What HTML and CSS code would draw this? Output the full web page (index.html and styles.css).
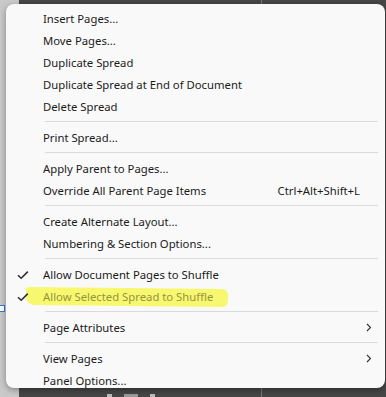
FILE: index.html
```html
<!DOCTYPE html>
<html>
<head>
    <meta charset="utf-8"/>
    <link rel="stylesheet" href="styles.css">
</head>
<body>
<div class="screen">
    <div class="top-strip"><span class="divider"></span></div>
    <span class="handle"></span>
    <div class="menu">
        <div class="item"><span class="label">Insert Pages...</span></div>
        <div class="item"><span class="label">Move Pages...</span></div>
        <div class="item"><span class="label">Duplicate Spread</span></div>
        <div class="item"><span class="label">Duplicate Spread at End of Document</span></div>
        <div class="item"><span class="label">Delete Spread</span></div>
        <div class="sep"></div>
        <div class="item"><span class="label">Print Spread...</span></div>
        <div class="sep"></div>
        <div class="item"><span class="label">Apply Parent to Pages...</span></div>
        <div class="item"><span class="label">Override All Parent Page Items</span><span class="shortcut">Ctrl+Alt+Shift+L</span></div>
        <div class="sep"></div>
        <div class="item"><span class="label">Create Alternate Layout...</span></div>
        <div class="item"><span class="label">Numbering &amp; Section Options...</span></div>
        <div class="sep"></div>
        <div class="item checked">
            <svg class="check" width="12" height="10" viewBox="0 0 12 10"><path d="M1 5.2 L4.2 8.2 L10.8 1.6" fill="none" stroke="#2b2b2b" stroke-width="1.5"/></svg>
            <span class="label">Allow Document Pages to Shuffle</span>
        </div>
        <div class="item checked disabled">
            <span class="marker"></span>
            <svg class="check" width="12" height="10" viewBox="0 0 12 10"><path d="M1 5.2 L4.2 8.2 L10.8 1.6" fill="none" stroke="#2b2b2b" stroke-width="1.5"/></svg>
            <span class="label">Allow Selected Spread to Shuffle</span>
        </div>
        <div class="sep"></div>
        <div class="item"><span class="label">Page Attributes</span>
            <svg class="arrow" width="6" height="9" viewBox="0 0 6 9"><path d="M1 1 L4.5 4.5 L1 8" fill="none" stroke="#333" stroke-width="1.1"/></svg>
        </div>
        <div class="sep"></div>
        <div class="item"><span class="label">View Pages</span>
            <svg class="arrow" width="6" height="9" viewBox="0 0 6 9"><path d="M1 1 L4.5 4.5 L1 8" fill="none" stroke="#333" stroke-width="1.1"/></svg>
        </div>
        <div class="item"><span class="label">Panel Options...</span></div>
    </div>
    <div class="bottom-strip">
        <span class="thumb"></span>
        <span class="thumb light"></span>
        <span class="thumb"></span>
        <span class="divider"></span>
    </div>
</div>
</body>
</html>
```

FILE: styles.css
```css
html, body {
    margin: 0;
    padding: 0;
}

body {
    width: 386px;
    height: 397px;
    overflow: hidden;
    background: linear-gradient(to right, #c9c9c9 19px, #464646 19px);
    font-family: 'Noto Sans', 'Open Sans', sans-serif;
}

.screen {
    position: relative;
    display: flex;
    flex-direction: column;
    height: 397px;
}

.top-strip {
    height: 4px;
    margin-left: 19px;
    position: relative;
}

.top-strip .divider, .bottom-strip .divider {
    position: absolute;
    left: 242px;
    top: 0;
    width: 1px;
    height: 100%;
    background: #7a7a7a;
}

.handle {
    position: absolute;
    left: -1px;
    top: 305px;
    width: 4px;
    height: 5px;
    border: 1px solid #2f7be0;
    background: #fff;
}

.menu {
    margin-left: 6px;
    width: 379px;
    height: 384px;
    box-sizing: border-box;
    padding-top: 3px;
    background: #f9f9f9;
    border-radius: 8px;
    box-shadow: 0 2px 6px rgba(0, 0, 0, 0.35);
    position: relative;
    z-index: 1;
}

.item {
    position: relative;
    display: flex;
    align-items: center;
    height: 22px;
    padding-left: 37px;
    padding-right: 22px;
    font-size: 11.3px;
    color: #1b1b1b;
}

.item .label {
    flex: 1;
    position: relative;
    white-space: nowrap;
}

.item .shortcut {
    white-space: nowrap;
    margin-right: 3px;
}

.item .check {
    position: absolute;
    left: 11px;
    top: 7px;
}

.item .arrow {
    position: absolute;
    right: 13px;
    top: 7px;
}

.item.disabled .label {
    color: #959540;
}

.item .marker {
    position: absolute;
    left: 20px;
    top: 3px;
    width: 202px;
    height: 18px;
    background: #f8f870;
    border-radius: 3px 6px 6px 8px;
    transform: skewY(0.6deg);
}

.sep {
    height: 1px;
    margin: 4px 7px 4px 39px;
    background: #dadada;
}

.bottom-strip {
    flex: 1;
    margin-left: 19px;
    position: relative;
    display: flex;
    align-items: flex-end;
    padding-left: 88px;
    gap: 12px;
}

.bottom-strip .thumb {
    width: 5px;
    height: 3px;
    background: #bdbdbd;
}

.bottom-strip .thumb.light {
    width: 14px;
    background: #9a9a9a;
}
```
